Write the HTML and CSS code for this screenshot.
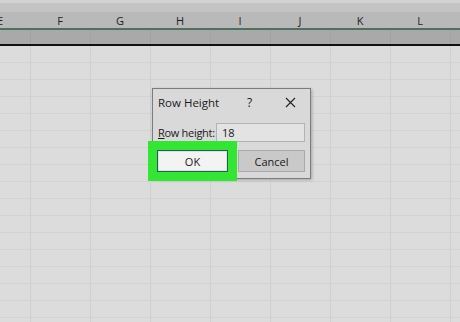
FILE: index.html
```html
<!DOCTYPE html>
<html lang="en">
<head>
  <meta charset="UTF-8">
  <title>Row Height</title>
  <link rel="stylesheet" href="styles.css">
</head>
<body>

  <div class="sheet">
    <div class="ribbon-edge"></div>
    <div class="col-header">
      <span>E</span><span>F</span><span>G</span><span>H</span>
      <span>I</span><span>J</span><span>K</span><span>L</span><span></span>
    </div>
    <div class="frozen-band"></div>
    <div class="grid"></div>
  </div>

  <!-- Row height dialog sits over the grid -->
  <div class="dialog">
    <div class="dialog-title">
      <span class="title-text">Row Height</span>
      <span class="title-help">?</span>
      <span class="title-close">
        <svg width="11" height="11" viewBox="0 0 11 11"><path d="M1 1 L10 10 M10 1 L1 10" stroke="#222" stroke-width="1.1"/></svg>
      </span>
    </div>
    <div class="dialog-row">
      <label class="field-label"><u>R</u>ow height:</label>
      <div class="field-input">18</div>
    </div>
    <div class="dialog-buttons">
      <button class="btn btn-ok">OK</button>
      <button class="btn btn-cancel">Cancel</button>
    </div>
  </div>

</body>
</html>
```

FILE: styles.css
```css
/* General */
body {
  margin: 0;
  width: 460px;
  height: 322px;
  overflow: hidden;
  font-family: 'Open Sans', 'Noto Sans', sans-serif;
  background-color: #dcdcdc;
  position: relative;
}

.sheet {
  display: flex;
  flex-direction: column;
  height: 322px;
}

.ribbon-edge {
  height: 3px;
  background-color: #d3d3d3;
}

.col-header {
  display: flex;
  height: 25px;
  margin-left: -30px;
  background: linear-gradient(#c4c4c4 0, #c4c4c4 9px, #b9b9b9 9px);
  border-bottom: 2px solid #50705f;
}

.col-header span {
  flex: 0 0 60px;
  text-align: center;
  font-size: 11px;
  line-height: 11px;
  padding-top: 12px;
  color: #1e1e1e;
}

.frozen-band {
  height: 14px;
  background-color: #a9a9a9;
  border-bottom: 2px solid #101010;
  background-image: repeating-linear-gradient(90deg, transparent 0, transparent 30px, #a2a2a2 30px, #a2a2a2 31px, transparent 31px, transparent 60px);
}

.grid {
  flex: 1;
  background-color: #dcdcdc;
  background-image:
    repeating-linear-gradient(90deg, transparent 0, transparent 30px, #d0d0d0 30px, #d0d0d0 31px, transparent 31px, transparent 60px),
    repeating-linear-gradient(180deg, transparent 0, transparent 16px, #d3d3d3 16px, #d3d3d3 17px);
}

/* Dialog */
.dialog {
  position: absolute;
  left: 152px;
  top: 88px;
  width: 157px;
  height: 89px;
  background-color: #d9d9d9;
  border: 1px solid #7c7c7c;
  box-shadow: 1px 1px 3px rgba(0, 0, 0, 0.25);
  color: #1a1a1a;
}

.dialog-title {
  display: flex;
  align-items: center;
  height: 27px;
  padding-left: 5px;
  font-size: 11.5px;
}

.title-text {
  width: 89px;
}

.title-help {
  width: 38px;
  font-size: 12px;
}

.title-close {
  display: flex;
  align-items: center;
}

.dialog-row {
  display: flex;
  align-items: center;
  height: 24px;
  margin-top: 4px;
  padding-left: 5px;
}

.field-label {
  width: 58px;
  font-size: 11px;
  letter-spacing: -0.3px;
}

.field-input {
  width: 82px;
  height: 17px;
  border: 1px solid #b3b3b3;
  background-color: #e3e3e3;
  font-size: 11px;
  line-height: 17px;
  padding-left: 5px;
}

.dialog-buttons {
  display: flex;
  gap: 10px;
  margin-top: 6px;
  padding-left: 4px;
}

.btn {
  font-family: 'Open Sans', 'Noto Sans', sans-serif;
  font-size: 11px;
  height: 22px;
  padding: 0;
  color: #1a1a1a;
}

.btn-ok {
  width: 71px;
  background-color: #f2f3f2;
  border: 1px solid #2c5a57;
  box-shadow: inset 0 0 0 1px #d4e4e2, 0 0 0 9px #33e633;
  position: relative;
  z-index: 1;
}

.btn-cancel {
  width: 67px;
  background-color: #c9c9c9;
  border: 1px solid #a9a9a9;
}
```
